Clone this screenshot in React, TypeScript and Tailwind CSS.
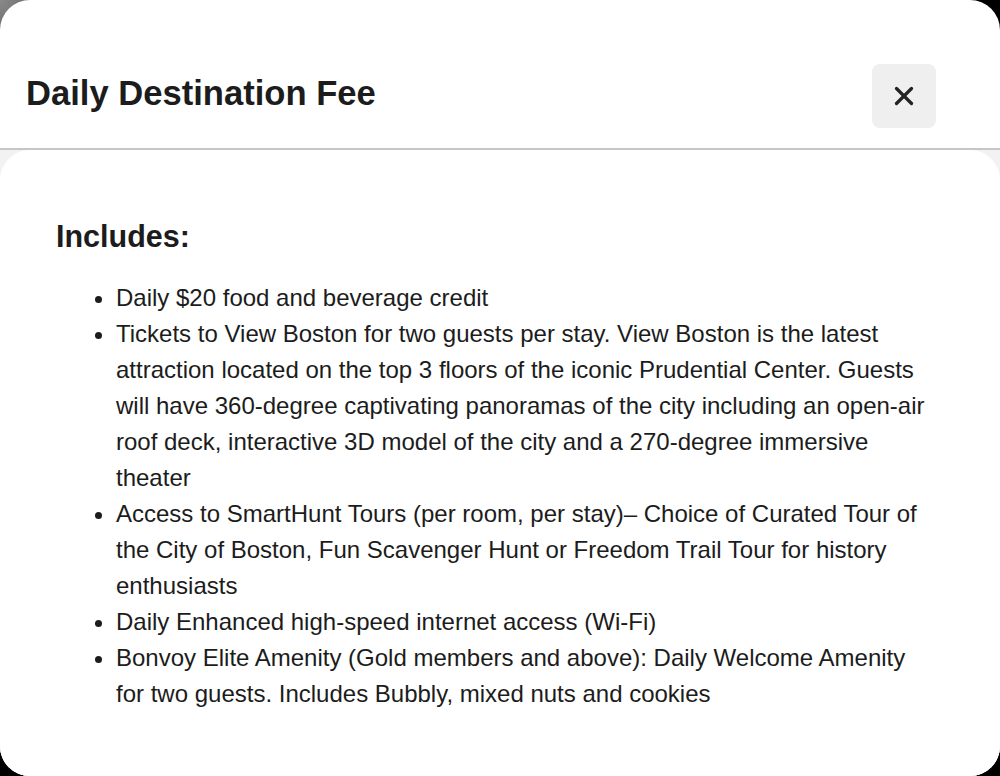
import { X } from 'lucide-react'

const items = [
  'Daily $20 food and beverage credit',
  'Tickets to View Boston for two guests per stay. View Boston is the latest attraction located on the top 3 floors of the iconic Prudential Center. Guests will have 360-degree captivating panoramas of the city including an open-air roof deck, interactive 3D model of the city and a 270-degree immersive theater',
  'Access to SmartHunt Tours (per room, per stay)– Choice of Curated Tour of the City of Boston, Fun Scavenger Hunt or Freedom Trail Tour for history enthusiasts',
  'Daily Enhanced high-speed internet access (Wi-Fi)',
  'Bonvoy Elite Amenity (Gold members and above): Daily Welcome Amenity for two guests. Includes Bubbly, mixed nuts and cookies',
]

export default function App() {
  return (
    <div className="h-[776px] w-[1000px] overflow-hidden bg-[radial-gradient(circle_at_top_left,#8a8a8a_0,#000_140px)] font-['Liberation_Sans',Arial,sans-serif] text-[#1c1c1c]">
      <div className="flex h-full flex-col overflow-hidden rounded-[30px] bg-white">
        <div className="flex h-[150px] shrink-0 items-start justify-between border-b-2 border-[#c6c6c6] pl-[26px] pr-[64px] pt-[64px]">
          <h1 className="mt-[9px] text-[34.6px] font-semibold leading-[40px]">Daily Destination Fee</h1>
          <button className="flex h-16 w-16 items-center justify-center rounded-lg bg-[#efefef] text-[#222]">
            <X size={30} strokeWidth={2.6} />
          </button>
        </div>
        <div className="flex-1 bg-[#f2f2f2]">
          <div className="h-full rounded-t-[30px] bg-white pl-[56px] pr-[70px] pt-[68px]">
            <h2 className="text-[30.5px] font-semibold leading-[36px]">Includes:</h2>
            <ul className="mt-[26px] list-disc pl-[60px] text-[24px] leading-[36px]">
              {items.map((item) => (
                <li key={item}>{item}</li>
              ))}
            </ul>
          </div>
        </div>
      </div>
    </div>
  )
}
